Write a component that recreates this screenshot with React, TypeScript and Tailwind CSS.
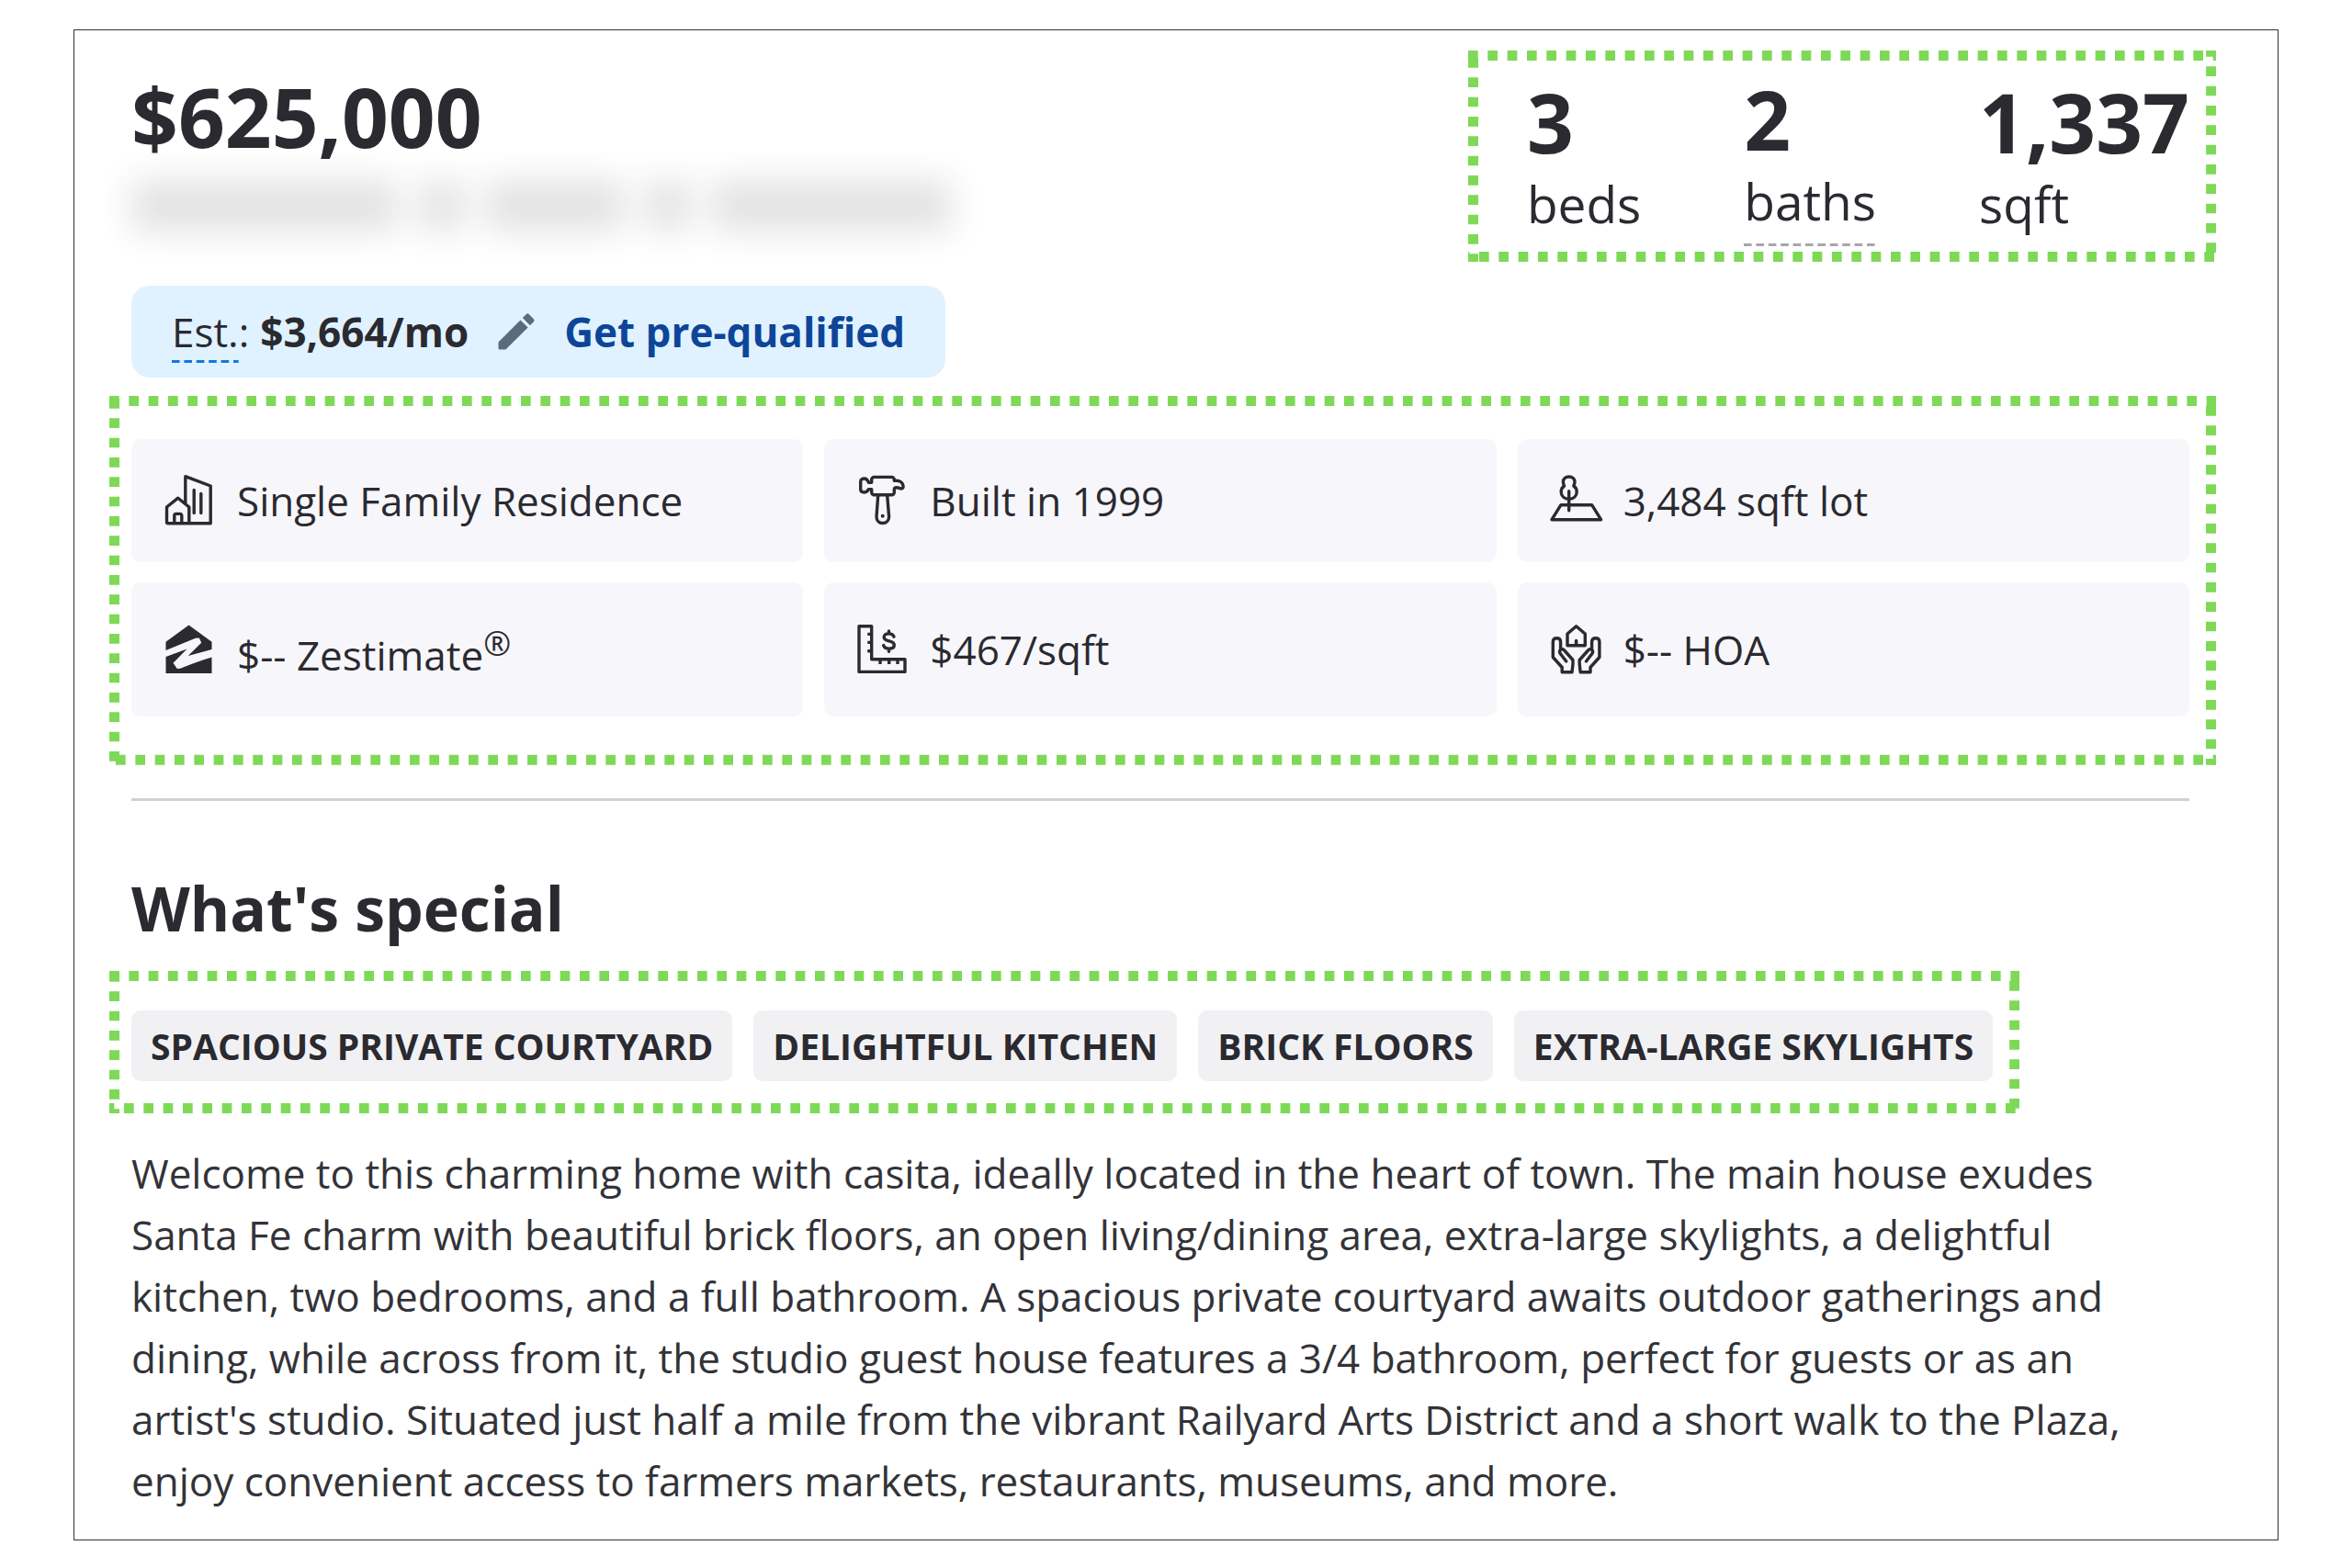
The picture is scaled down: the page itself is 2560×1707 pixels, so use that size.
import type { ReactNode } from "react";

type Phases = { top: number; right: number; bottom: number; left: number };

const DASH = 32 / 3;

/* Green square-dash outline around a highlighted area. */
function Highlight({ phases, className, children }: { phases: Phases; className: string; children: ReactNode }) {
  const line = { stroke: "#7ed957", strokeWidth: 11, strokeDasharray: `${DASH} ${DASH}` };
  return (
    <div className={`relative ${className}`}>
      <svg className="pointer-events-none absolute inset-0 size-full" aria-hidden="true">
        <line x1="0" y1="5.5" x2="100%" y2="5.5" {...line} strokeDashoffset={-phases.top} />
        <line x1="5.5" y1="0" x2="5.5" y2="100%" {...line} strokeDashoffset={-phases.left} />
        <svg x="0" y="100%" width="100%" height="11" overflow="visible">
          <line x1="0" y1="-5.5" x2="100%" y2="-5.5" {...line} strokeDashoffset={-phases.bottom} />
        </svg>
        <svg x="100%" y="0" width="11" height="100%" overflow="visible">
          <line x1="-5.5" y1="0" x2="-5.5" y2="100%" {...line} strokeDashoffset={-phases.right} />
        </svg>
      </svg>
      {children}
    </div>
  );
}

function DashedRule({ color }: { color: string }) {
  return (
    <svg className="block h-[3px] w-0 min-w-full" aria-hidden="true">
      <line x1="0" y1="1.5" x2="100%" y2="1.5" stroke={color} strokeWidth="3" strokeDasharray="8.6 4.8" />
    </svg>
  );
}

function Icon({ children }: { children: ReactNode }) {
  return (
    <svg
      viewBox="0 0 60 60"
      className="size-[60px] shrink-0"
      fill="none"
      stroke="#2a2a30"
      strokeWidth="3.4"
      strokeLinejoin="round"
      strokeLinecap="round"
      aria-hidden="true"
    >
      {children}
    </svg>
  );
}

const HomeIcon = () => (
  <Icon>
    <path d="M25.8 33V3.7L53.2 14v40.7H7a1.5 1.5 0 0 1-1.5-1.5V37l12.3-9.8L29.8 37v17.5" />
    <path d="M13.8 54v-7.8a1.8 1.8 0 0 1 1.8-1.8H20a1.8 1.8 0 0 1 1.8 1.8V54" />
    <path d="M35.2 18.5V43.5M42.8 22.5V43.5" />
  </Icon>
);

const HammerIcon = () => (
  <Icon>
    <path d="M21.5 4.4h19a2.7 2.7 0 0 1 2.8 2.7v1.2h2.2c4.2 0 7.3 2.4 7.6 6 .1 1.8-.8 2.8-2.3 2.6-1.7-.3-3-1.2-5-1.2-1.6 0-2.5.8-2.5 2.3v3a2.7 2.7 0 0 1-2.8 2.7h-19a2.7 2.7 0 0 1-2.8-2.7v-3.4h-3.2c-1.1 2.3-2.3 3.4-4.6 3.4-2.7 0-4.2-.9-4.2-3.2V9.2C6.7 7 8.2 6 10.9 6c2.3 0 3.5 1.7 4.6 4.3h3.2V7.1a2.7 2.7 0 0 1 2.8-2.7z" />
    <path d="M25.7 24.4 24 47.5c0 4 2.7 7 6.7 7s6.9-3 6.9-7l-1.9-23.1" />
    <circle cx="30.7" cy="46.7" r="2" fill="#2a2a30" stroke="none" />
  </Icon>
);

const LotIcon = () => (
  <Icon>
    <path d="M14 34.7H47.6L57.6 50.7H4z" />
    <path d="M22.7 19.7V40.7" />
    <path d="M22.7 4c3.7 0 6.3 2.4 6.3 5.6 0 1.9-.5 3-1.2 4.4 2.2 1.5 3.4 3.6 3.4 6.4 0 4.6-3.5 7.8-8.5 7.800s-8.5-3.2-8.5-7.8c0-2.8 1.2-4.9 3.4-6.4-.7-1.4-1.2-2.5-1.2-4.4C16.4 6.4 19 4 22.7 4z" />
  </Icon>
);

const ZestimateIcon = () => (
  <Icon>
    <path
      fill="#2a2a30"
      stroke="none"
      d="M29.5 3.4 54.5 21.7V30L28.8 37 43.2 22.7 40.8 17.4 36.8 17.7 4.5 31V21.7z"
    />
    <path
      fill="#2a2a30"
      stroke="none"
      d="M4.5 38 27.5 29.4 12.5 44.7 16.8 51 20.2 50.7C32 46 44 41.3 54.5 38.4V56H4.5z"
    />
  </Icon>
);

const RulerIcon = () => (
  <Icon>
    <path d="M5 4.7H18.7V40.7H55V54.4H5z" />
    <path
      strokeLinecap="butt"
      d="M14.3 13.4H18.7M14.3 22.4H18.7M14.3 31.7H18.7M28 40.7V46M37.7 40.7V46M47 40.7V46"
    />
    <path d="M43 16.2c-.8-2.2-2.9-3.3-5.6-3.3-3.1 0-5.2 1.5-5.2 3.9 0 5.5 11.1 2.6 11.1 8.3 0 2.6-2.2 4.2-5.7 4.2-3.1 0-5.3-1.3-6-3.7M37.5 10V12.5M37.5 29.5V32.3" />
  </Icon>
);

const hand =
  "M5.3 21.8c0-2.7 1.5-4.1 4.1-4.1s4.2 1.4 4.2 4.1v8.4c1.8-.8 3.3-.3 4.5 1.3L27 41.5V46l-1 8.7H15.2V49.5L5.3 38.5zM13.6 30.2c-1.4 1.6-1.4 3-.2 4.6L19.8 43";

const HoaIcon = () => (
  <Icon>
    <path d="M30.6 4.7 40.3 13V25.7H21V13z" />
    <path strokeWidth="3.6" d="M30.6 20.5V25" />
    <path d={hand} />
    <path d={hand} transform="translate(61.2 0) scale(-1 1)" />
  </Icon>
);

const PencilIcon = () => (
  <svg viewBox="0 0 24 24" className="size-[52px]" fill="#596b7c" aria-hidden="true">
    <path d="M3 17.6V20.3c0 .4.3.7.7.7H6.4c.2 0 .4-.1.5-.2L17.81 9.94l-3.75-3.75L3.2 17.1c-.1.1-.2.3-.2.5zM20.71 7.04a1 1 0 0 0 0-1.41l-2.34-2.34a1 1 0 0 0-1.41 0l-1.83 1.83 3.75 3.75z" />
  </svg>
);

const facts: { icon: ReactNode; text: ReactNode }[] = [
  { icon: <HomeIcon />, text: "Single Family Residence" },
  { icon: <HammerIcon />, text: "Built in 1999" },
  { icon: <LotIcon />, text: "3,484 sqft lot" },
  {
    icon: <ZestimateIcon />,
    text: (
      <>
        $-- Zestimate<sup className="static align-super text-[36px] leading-[66px]">®</sup>
      </>
    ),
  },
  { icon: <RulerIcon />, text: "$467/sqft" },
  { icon: <HoaIcon />, text: "$-- HOA" },
];

const tags = ["SPACIOUS PRIVATE COURTYARD", "DELIGHTFUL KITCHEN", "BRICK FLOORS", "EXTRA-LARGE SKYLIGHTS"];

function Stat({ value, label, underlined }: { value: string; label: string; underlined?: boolean }) {
  return (
    <div className={underlined ? "" : "pt-[3px]"}>
      <div className="text-[89px] leading-[102px] font-bold">{value}</div>
      <div className="text-[55px] leading-[76px]">{label}</div>
      {underlined && (
        <div className="pt-2">
          <DashedRule color="#a7a6ab" />
        </div>
      )}
    </div>
  );
}

export default function App() {
  return (
    <div className="min-h-screen bg-white px-20 py-8 font-['Open_Sans',sans-serif] text-[44px] text-[#2a2a30]">
      <main className="border border-[#333333] pr-[67px] pb-[30px] pl-[38px]">
        <header className="flex items-start justify-between">
          <div className="pt-[34px] pl-6">
            <h1 className="text-[89px] leading-[120px] font-bold">$625,000</h1>
            <div className="flex h-[74px] items-center gap-6 opacity-13 blur-[18px]" aria-hidden="true">
              <span className="h-14 w-[290px] bg-[#2a2a30]" />
              <span className="h-14 w-12 bg-[#2a2a30]" />
              <span className="h-14 w-[150px] bg-[#2a2a30]" />
              <span className="h-14 w-12 bg-[#2a2a30]" />
              <span className="h-14 w-[260px] bg-[#2a2a30]" />
            </div>
            <div className="mt-[50px] inline-flex items-center rounded-[20px] bg-[#e0f2ff] px-11 py-4 leading-[68px]">
              <span className="relative">
                Est.
                <span className="absolute inset-x-0 bottom-0">
                  <DashedRule color="#1277e1" />
                </span>
              </span>
              <span>:</span>
              <strong className="ml-3 font-bold">$3,664/mo</strong>
              <button type="button" aria-label="Edit monthly payment" className="ml-[26px]">
                <PencilIcon />
              </button>
              <a href="#pre-qualify" className="ml-[26px] font-bold text-[#0d4599]">
                Get pre-qualified
              </a>
            </div>
          </div>
          <Highlight
            phases={{ top: 0, right: -4, bottom: 12, left: 8 }}
            className="mt-[22px] flex gap-[112px] pt-6 pr-[29px] pb-[17px] pl-16"
          >
            <Stat value="3" label="beds" />
            <Stat value="2" label="baths" underlined />
            <Stat value="1,337" label="sqft" />
          </Highlight>
        </header>

        <Highlight
          phases={{ top: 0, right: 11, bottom: 7, left: 3 }}
          className="mt-5 pt-[47px] pr-[29px] pb-[53px] pl-6"
        >
          <ul className="grid grid-cols-3 gap-x-[23px] gap-y-[22px]">
            {facts.map((fact, i) => (
              <li key={i} className="flex items-center gap-[22px] rounded-[10px] bg-[#f7f7fb] px-[33px] py-[34px]">
                {fact.icon}
                <span className="leading-[66px]">{fact.text}</span>
              </li>
            ))}
          </ul>
        </Highlight>

        <hr className="mt-9 mr-[29px] ml-6 border-t-[3px] border-[#d1d1d5]" />

        <section>
          <h2 className="mt-[72px] pl-6 text-[66px] leading-[88px] font-bold">What's special</h2>
          <Highlight
            phases={{ top: 0, right: 11, bottom: 16, left: 1 }}
            className="mt-[25px] w-fit pt-[43px] pr-[29px] pb-[35px] pl-6"
          >
            <ul className="flex gap-[23px]">
              {tags.map((tag) => (
                <li
                  key={tag}
                  className="rounded-[10px] bg-[#f1f1f4] px-[21px] py-[11px] text-[39px] leading-[55px] font-bold whitespace-nowrap"
                >
                  {tag}
                </li>
              ))}
            </ul>
          </Highlight>
          <p className="mt-8 pr-[29px] pl-6 leading-[67px] text-[#333338]">
            Welcome to this charming home with casita, ideally located in the heart of town. The main house exudes Santa
            Fe charm with beautiful brick floors, an open living/dining area, extra-large skylights, a delightful
            kitchen, two bedrooms, and a full bathroom. A spacious private courtyard awaits outdoor gatherings and
            dining, while across from it, the studio guest house features a 3/4 bathroom, perfect for guests or as an
            artist's studio. Situated just half a mile from the vibrant Railyard Arts District and a short walk to the
            Plaza, enjoy convenient access to farmers markets, restaurants, museums, and more.
          </p>
        </section>
      </main>
    </div>
  );
}
